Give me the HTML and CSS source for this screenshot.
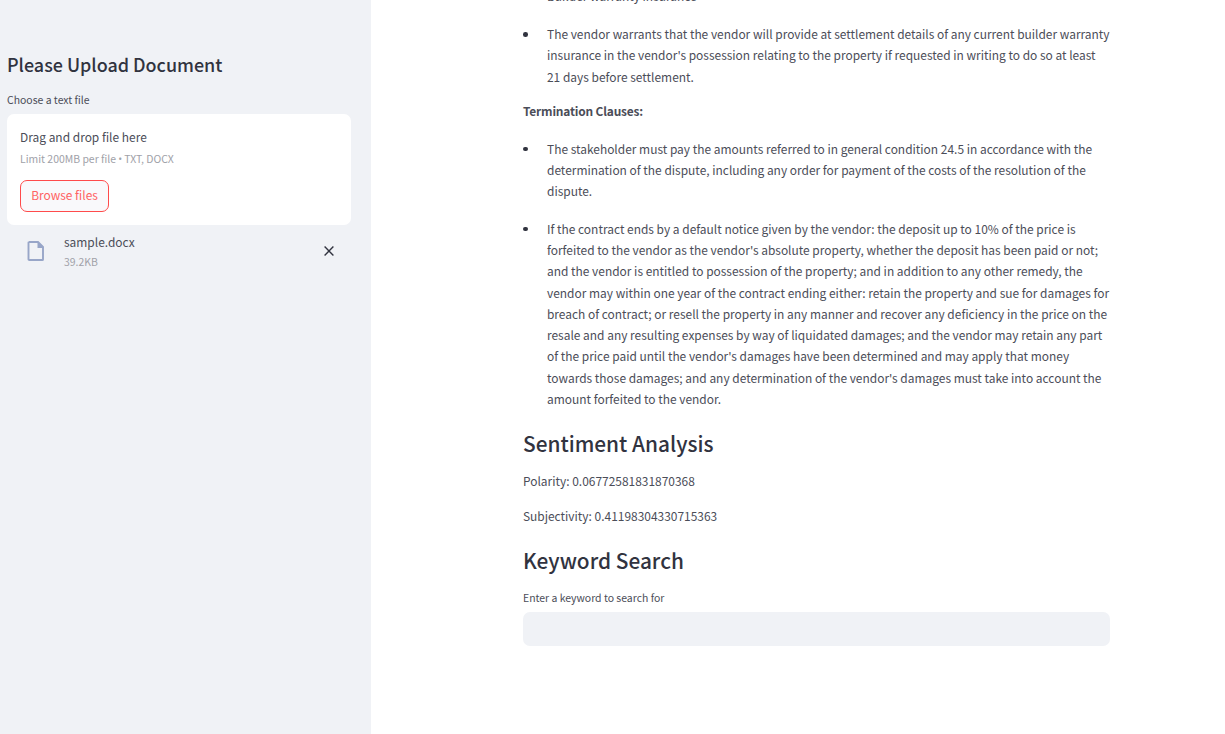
FILE: index.html
```html
<!DOCTYPE html>
<html lang="en">
<head>
<meta charset="utf-8">
<title>Document Analysis</title>
<link rel="stylesheet" href="styles.css">
</head>
<body>
<div class="app">
  <aside class="sidebar">
    <h2 class="sidebar-title">Please Upload Document</h2>
    <div class="label">Choose a text file</div>
    <section class="dropzone">
      <div class="drop-title">Drag and drop file here</div>
      <div class="small">Limit 200MB per file <span class="dot">•</span> TXT, DOCX</div>
      <button class="browse" type="button">Browse files</button>
    </section>
    <div class="file">
      <svg class="file-icon" viewBox="0 0 18 20" width="18" height="20"><path d="M2 1H11L16 6V18.4Q16 19 15.4 19H2.4Q1.5 19 1.5 18.2V1.8Q1.5 1 2.3 1Z" fill="none" stroke="#98a6c8" stroke-width="1.9"/><path d="M10.5 1V7H17L11 .6Z" fill="#98a6c8"/></svg>
      <div class="file-info">
        <div class="file-name">sample.docx</div>
        <div class="small file-size">39.2KB</div>
      </div>
      <svg class="close" viewBox="0 0 10 10" width="10" height="10"><path d="M.6 .6L9.4 9.4M9.4 .6L.6 9.4" stroke="#31333f" stroke-width="1.4"/></svg>
    </div>
  </aside>
  <main class="main">
    <ul class="list">
      <li class="item item-cut">Builder warranty insurance</li>
      <li class="item">The vendor warrants that the vendor will provide at settlement details of any current builder warranty<br>insurance in the vendor's possession relating to the property if requested in writing to do so at least<br>21 days before settlement.</li>
    </ul>
    <p class="text clause"><strong>Termination Clauses:</strong></p>
    <ul class="list">
      <li class="item">The stakeholder must pay the amounts referred to in general condition 24.5 in accordance with the<br>determination of the dispute, including any order for payment of the costs of the resolution of the<br>dispute.</li>
      <li class="item">If the contract ends by a default notice given by the vendor: the deposit up to 10% of the price is<br>forfeited to the vendor as the vendor's absolute property, whether the deposit has been paid or not;<br>and the vendor is entitled to possession of the property; and in addition to any other remedy, the<br>vendor may within one year of the contract ending either: retain the property and sue for damages for<br>breach of contract; or resell the property in any manner and recover any deficiency in the price on the<br>resale and any resulting expenses by way of liquidated damages; and the vendor may retain any part<br>of the price paid until the vendor's damages have been determined and may apply that money<br>towards those damages; and any determination of the vendor's damages must take into account the<br>amount forfeited to the vendor.</li>
    </ul>
    <h3 class="heading">Sentiment Analysis</h3>
    <p class="text">Polarity: 0.06772581831870368</p>
    <p class="text">Subjectivity: 0.41198304330715363</p>
    <h3 class="heading">Keyword Search</h3>
    <label class="label" for="kw">Enter a keyword to search for</label>
    <input class="field" id="kw" type="text">
  </main>
</div>
</body>
</html>
```
FILE: styles.css
```css
* { box-sizing: border-box; }
body {
  margin: 0;
  overflow: hidden;
  background: #fff;
  color: #4b4d58;
  font-family: "Noto Sans CJK SC", "Open Sans", sans-serif;
  font-size: 11.94px;
  line-height: 21.33px;
}
.app { display: flex; height: 734px; }
.sidebar {
  width: 370.6px;
  flex: none;
  padding: 52px 20px 0 7px;
  background: #f0f2f6;
}
.sidebar-title {
  margin: 0;
  color: #31333f;
  font-size: 17.93px;
  font-weight: 500;
  line-height: 24px;
}
.label {
  display: block;
  margin-top: 14px;
  font-size: 10.45px;
  line-height: 20px;
}
.dropzone {
  height: 111px;
  margin-top: 4px;
  padding: 12px 13px;
  background: #fff;
  border-radius: 7px;
}
.small {
  color: #a0a1a8;
  font-size: 10.45px;
  line-height: 20px;
}
.dot { font-family: "Open Sans", sans-serif; margin: 0 -.2px; }
.drop-title { line-height: 22px; }
.drop-title + .small { padding-top: 1px; }
.browse {
  display: block;
  width: 89px;
  height: 32px;
  margin-top: 11px;
  padding: 0 0 2px;
  border: 1px solid #ff4b4b;
  border-radius: 7px;
  background: #f9f9fb;
  color: #ff6262;
  font: inherit;
}
.file { display: flex; padding: 7px 17px 0 20px; }
.file-icon { margin-top: 9px; }
.file-info { flex: 1; margin-left: 19px; }
.file-name { line-height: 20px; }
.file-size { line-height: 20px; }
.close { margin-top: 14px; }
.main {
  width: 587px;
  margin-left: 152.4px;
}
.list { margin: 0; padding: 0; list-style: none; }
.item {
  position: relative;
  margin-bottom: 16px;
  padding-left: 24px;
  white-space: nowrap;
}
.item::before {
  content: "";
  position: absolute;
  left: .5px;
  top: 9px;
  width: 4.6px;
  height: 4.6px;
  border-radius: 50%;
  background: #31333f;
}
.item-cut { margin-top: -15.3px; margin-bottom: 17px; }
.item-cut::before { display: none; }
.text { margin: 0 0 13.6px; }
.clause { margin: -3px 0 16.2px; }
.clause strong { font-weight: 700; letter-spacing: -.18px; }
.heading {
  margin: 0;
  padding: 6px 0 12px;
  color: #31333f;
  font-size: 20.83px;
  font-weight: 500;
  line-height: 28px;
}
.list + .heading { padding: 3.6px 0 13px; }
.heading + .label { margin-top: 2px; }
.field {
  display: block;
  width: 100%;
  height: 34px;
  margin-top: 4px;
  border: 0;
  border-radius: 7px;
  background: #f0f2f6;
}
```
